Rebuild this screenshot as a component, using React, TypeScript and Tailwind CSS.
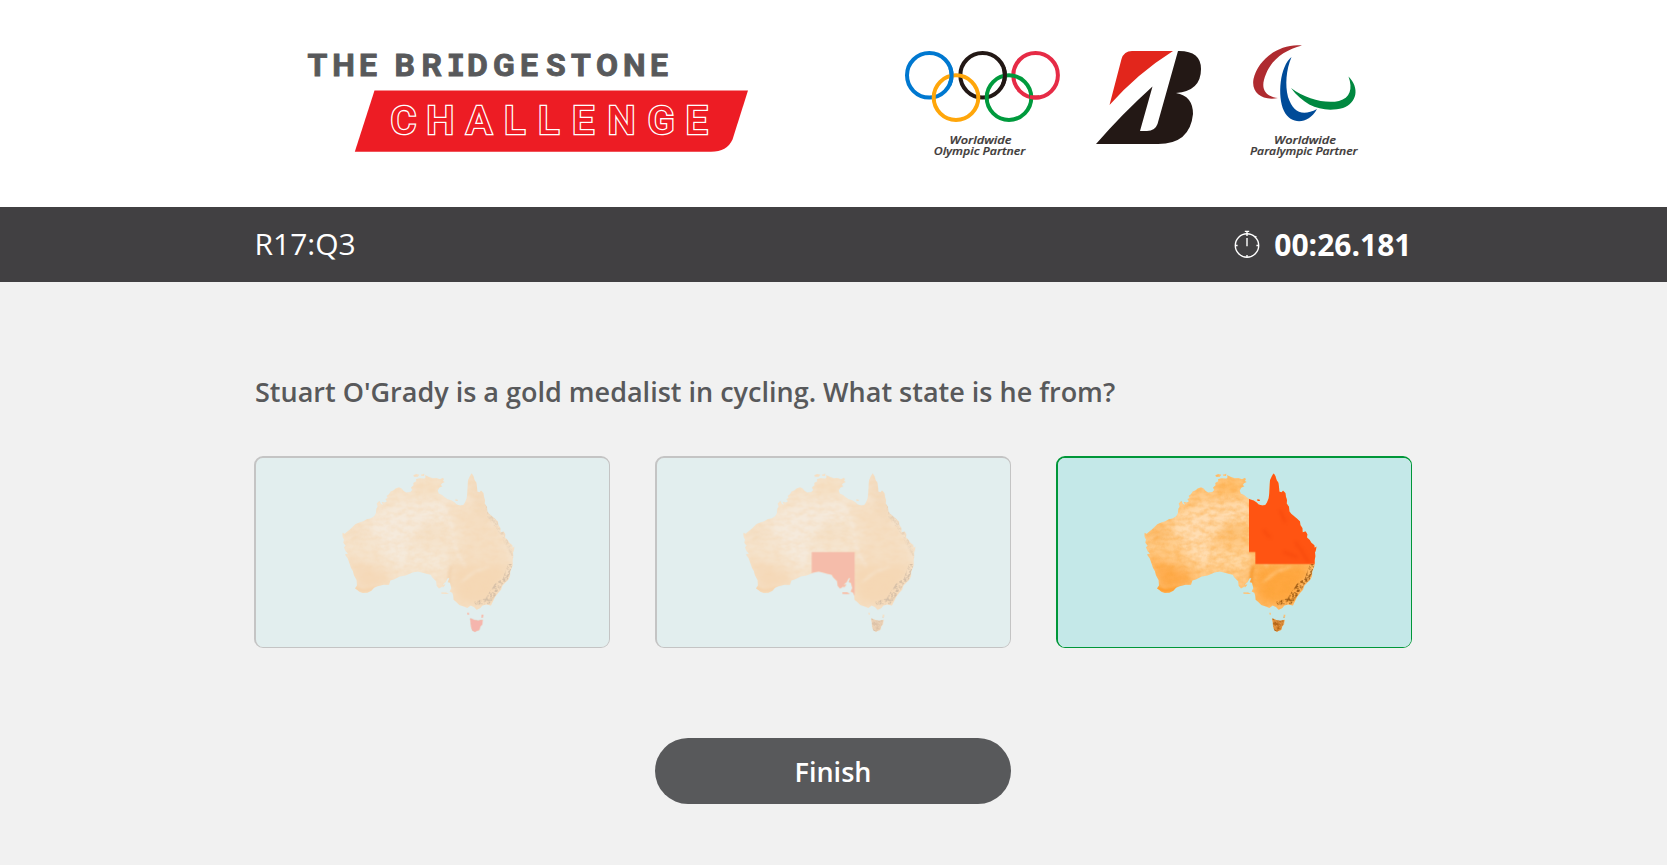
import React from "react";

const MAINLAND =
  "M283 248 L290 251 L299 243 L306 238 L314 230 L322 222 L334 217 L346 213 L357 207 L368 205 L379 198 L384 188 L385 176 L389 169 L386 160 L394 152 L399 161 L405 164 L401 155 L411 157 L417 153 L412 146 L419 143 L416 137 L423 132 L428 124 L437 120 L444 114 L453 111 L461 115 L467 122 L475 127 L487 125 L493 119 L489 112 L497 105 L496 98 L505 93 L504 87 L515 84 L529 85 L533 81 L531 74 L541 79 L554 84 L565 83 L576 87 L584 83 L588 86 L585 92 L590 95 L582 99 L578 104 L583 108 L574 112 L569 121 L572 130 L582 134 L590 141 L599 147 L611 151 L620 157 L626 163 L637 166 L646 164 L651 157 L656 144 L658 128 L659 108 L660 90 L666 77 L671 69 L676 77 L680 90 L685 97 L687 110 L688 124 L695 126 L699 121 L706 128 L708 140 L711 150 L710 160 L717 170 L718 184 L724 191 L733 199 L742 206 L750 214 L751 224 L757 233 L758 246 L767 244 L772 252 L771 262 L779 269 L784 278 L793 285 L794 293 L800 289 L798 299 L795 307 L796 318 L794 330 L794 345 L791 354 L787 364 L786 378 L780 390 L772 397 L763 407 L759 419 L750 429 L741 441 L735 453 L729 466 L715 463 L703 466 L697 474 L686 479 L678 471 L668 466 L658 474 L648 469 L634 465 L625 456 L617 449 L616 438 L613 428 L605 424 L610 414 L606 398 L599 396 L604 384 L599 384 L593 396 L587 401 L581 411 L573 415 L566 407 L564 393 L553 382 L548 374 L535 371 L522 367 L509 364 L493 367 L473 376 L455 379 L440 387 L427 391 L423 404 L407 404 L389 408 L378 413 L370 422 L358 428 L344 429 L334 425 L328 420 L321 415 L327 406 L326 390 L318 375 L315 363 L309 353 L304 338 L299 324 L291 313 L300 310 L292 302 L288 291 L293 287 L286 278 L288 268 L283 260Z";
const TASMANIA =
  "M666 505 L671 506 L679 510 L690 512 L704 509 L703 523 L697 529 L694 540 L685 543 L681 546 L673 541 L669 530 L668 518Z";
const ISLANDS =
  "M496 75 L505 71 L514 73 L509 79 L498 79Z M518 73 L529 70 L528 77 L521 77Z M580 427 L594 427 L603 431 L593 432 L580 431Z M582 407 L589 403 L592 404 L585 412Z M658 488 L662 488 L663 494 L659 494Z M701 494 L706 494 L705 502 L701 503Z M621 148 L628 148 L630 152 L623 152Z";

type State = "tas" | "sa" | "qld";

function AustraliaMap({ id, state }: { id: string; state: State }) {
  return (
    <svg viewBox="24 23 1059 568" preserveAspectRatio="none" className="block h-full w-full">
      <defs>
        <clipPath id={id + "-land"}>
          <path d={MAINLAND} />
          <path d={TASMANIA} />
          <path d={ISLANDS} />
        </clipPath>
        <clipPath id={id + "-main"}>
          <path d={MAINLAND} />
          <path d={ISLANDS} />
        </clipPath>
        <filter id={id + "-soft"} x="-50%" y="-50%" width="200%" height="200%" colorInterpolationFilters="sRGB">
          <feGaussianBlur stdDeviation="16" />
        </filter>
        <filter id={id + "-soft2"} x="-50%" y="-50%" width="200%" height="200%" colorInterpolationFilters="sRGB">
          <feGaussianBlur stdDeviation="4" />
        </filter>
        <filter id={id + "-grain"} x="0" y="0" width="100%" height="100%" colorInterpolationFilters="sRGB">
          <feTurbulence type="fractalNoise" baseFrequency="0.04 0.07" numOctaves="5" seed="8" />
          <feColorMatrix values="0 0 0 0 0.98  0 0 0 0 0.64  0 0 0 0 0.22  1.6 0 0 0 -0.55" />
        </filter>
        <filter id={id + "-dark"} x="-20%" y="-20%" width="140%" height="140%" colorInterpolationFilters="sRGB">
          <feTurbulence type="fractalNoise" baseFrequency="0.11" numOctaves="3" seed="3" result="n" />
          <feColorMatrix in="n" values="0 0 0 0 0  0 0 0 0 0  0 0 0 0 0  3 0 0 0 -1.1" result="m" />
          <feComposite in="SourceGraphic" in2="m" operator="in" />
        </filter>
      </defs>
      <rect x="0" y="0" width="1110" height="620" fill="#c4e8e8" />
      <g clipPath={`url(#${id}-land)`}>
        <rect x="270" y="60" width="540" height="500" fill="#ffcb88" />
        <g filter={`url(#${id}-soft)`}>
          <path d="M350 215 L450 160 L590 150 L600 210 L470 260 L520 330 L440 350 L390 280Z" fill="#ffddb2" />
          <path d="M480 310 L560 300 L610 310 L600 360 L480 350Z" fill="#ffd8a4" />
          <path d="M600 170 L690 170 L760 260 L790 350 L740 460 L620 460 L600 350 L650 260Z" fill="#ffb45a" opacity="0.7" />
          <path d="M610 350 L790 345 L730 470 L620 465Z" fill="#ffa33a" opacity="0.85" />
          <path d="M300 320 L330 420 L420 410 L430 370 L350 340Z" fill="#ffaa4a" />
          <ellipse cx="545" cy="240" rx="30" ry="18" fill="#fab763" />
          <ellipse cx="325" cy="250" rx="25" ry="13" fill="#f8b05a" />
          <path d="M500 90 L580 90 L570 130 L500 130Z" fill="#ffba62" />
          <path d="M655 75 L690 80 L730 210 L700 200Z" fill="#f5a54a" />
        </g>
        <g filter={`url(#${id}-soft2)`} fill="none" strokeLinecap="round">
          <path d="M560 150 Q610 190 620 270 Q625 320 650 345" stroke="#ffe0b6" strokeWidth="8" opacity="0.7" />
          <path d="M640 395 Q680 360 720 350" stroke="#ffce8e" strokeWidth="5" />
          <path d="M322 412 Q340 430 380 415" stroke="#ff961f" strokeWidth="10" />
          <path d="M610 350 Q600 380 606 400" stroke="#f38a17" strokeWidth="7" />
        </g>
        <rect x="270" y="60" width="540" height="500" filter={`url(#${id}-grain)`} opacity="0.6" />
        <g filter={`url(#${id}-dark)`} fill="#8a4c0c" opacity="0.8">
          <path d="M780 342 L794 342 L780 388 L766 400 L735 448 L724 462 L680 464 L680 454 L712 445 L740 402 L764 385Z" />
          <path d="M666 500 L706 500 L694 550 L670 545Z" />
          <path d="M710 150 L722 170 L755 225 L790 290 L800 330 L785 310 L760 255 L718 200Z" opacity="0.45" />
        </g>
        <path d="M666 505 L704 509 L694 540 L681 546 L669 530Z" fill="#c96a10" opacity="0.55" />
      </g>
      {state === "qld" && (
        <g clipPath={`url(#${id}-main)`}>
          <path d="M597 130 L650 60 L720 60 L810 270 L810 342 L616 342 L616 306 L597 306Z" fill="#ff5412" />
          <path d="M735 275 Q755 300 775 335 M640 240 L660 262 M690 180 L705 215 M700 305 L740 320" stroke="#ee3d08" strokeWidth="5" fill="none" opacity="0.5" filter={`url(#${id}-soft2)`} />
        </g>
      )}
      {state === "sa" && (
        <g clipPath={`url(#${id}-main)`}>
          <path d="M488 306 H617 V436 H488Z" fill="#ff541c" />
        </g>
      )}
      {state === "tas" && (
        <>
          <path d={TASMANIA} fill="#ff3d25" />
          <path d="M658 488 L662 488 L663 494 L659 494Z M701 494 L706 494 L705 502 L701 503Z" fill="#ff3d25" />
        </>
      )}
    </svg>
  );
}

function Answer({ state, selected }: { state: State; selected?: boolean }) {
  return (
    <button
      className={
        "h-[192px] w-[356px] overflow-hidden rounded-[9px] border-t-2 border-r border-b border-l-2 " +
        (selected ? "border-[#009739]" : "border-[#c4c4c4]")
      }
    >
      <div className={selected ? "h-full" : "h-full opacity-[0.33]"}>
        <AustraliaMap id={state} state={state} />
      </div>
    </button>
  );
}

function ChallengeLogo() {
  return (
    <svg viewBox="300 44 456 116" className="h-[116px] w-[456px]">
      <g fill="#58595b" stroke="#58595b" strokeWidth="0.9" fontFamily="Roboto" fontWeight="700" fontSize="32">
        <text y="76" x="307.5 332.3 359">THE</text>
        <text y="76" x="394.5 421.5">BR</text>
        <text y="76" x="446.5" fontFamily="DejaVu Sans Mono" fontSize="31">I</text>
        <text y="76" x="467 493 520 546 571 596 623 650">DGESTONE</text>
      </g>
      <path d="M374.5 90.5 H748 L732.5 139.5 Q727 151.8 711 151.8 H354.8Z" fill="#ed1c24" />
      <text
        y="133.6"
        x="390.5 426.3 466 504 538 572 607.5 647.8 685.5"
        fill="#ed1c24"
        stroke="#fff"
        strokeWidth="2.6"
        strokeLinejoin="miter"
        fontFamily="Roboto"
        fontWeight="500"
        fontSize="39.5"
        style={{ paintOrder: "stroke" }}
      >
        CHALLENGE
      </text>
    </svg>
  );
}

function PartnerLogos() {
  const arc = (cx: number, cy: number, a: number, b: number) => {
    const r = 22.3;
    const p = (t: number) => `${cx + r * Math.cos((t * Math.PI) / 180)} ${cy + r * Math.sin((t * Math.PI) / 180)}`;
    return `M${p(a)} A${r} ${r} 0 0 1 ${p(b)}`;
  };
  return (
    <svg viewBox="896 40 470 124" className="h-[124px] w-[470px]">
      <g fill="none" strokeWidth="4">
        <circle cx="929.3" cy="75.3" r="22.3" stroke="#0078d0" />
        <circle cx="982.6" cy="75.3" r="22.3" stroke="#231815" />
        <circle cx="1035.6" cy="75.3" r="22.3" stroke="#e62b46" />
        <circle cx="956" cy="97.6" r="22.3" stroke="#ffa60a" />
        <circle cx="1009" cy="97.6" r="22.3" stroke="#009a3d" />
        <path d={arc(929.3, 75.3, -20, 25)} stroke="#0078d0" />
        <path d={arc(982.6, 75.3, -20, 25)} stroke="#231815" />
        <path d={arc(1035.6, 75.3, 80, 105)} stroke="#e62b46" />
      </g>
      <path d="M1109.5 105 L1121.5 59 Q1124 51 1132 51 H1173 Q1138 73 1109.5 105Z" fill="#e2261c" />
      <path
        d="M1178 51 Q1201 50.5 1201 69 Q1201 91 1176 93 Q1193 96 1193 114 Q1190 144 1158 144 H1096 Q1122 114 1152.5 86.5 L1140 131 H1147 Q1155 131 1157.5 124Z"
        fill="#231815"
      />
      <g>
        <path d="M1302 45.5 C1280 43 1258 59 1253.5 79 C1251 93 1262 101 1278 98 C1264 96 1260 88 1266 74 C1272 59 1285 50 1302 45.5Z" fill="#af2b30" />
        <path d="M1291.5 57 C1280 66 1277 96 1284 111 C1291 125 1308 125 1317 109 C1302 117 1293 112 1288 97 C1285 85 1286 70 1291.5 57Z" fill="#004b98" />
        <path d="M1348.5 76.5 C1360 88 1357 103 1343 108 C1324 113 1305 107 1291 88 C1306 99 1325 104 1339 101 C1350 98 1353 89 1348.5 76.5Z" fill="#008840" />
      </g>
      <g fontFamily="Open Sans" fontWeight="600" fontStyle="italic" fontSize="11" fill="#3e3a39" stroke="#3e3a39" strokeWidth="0.2">
        <text x="949.5" y="144.2" textLength="62" lengthAdjust="spacingAndGlyphs">Worldwide</text>
        <text x="933.8" y="155.3" textLength="91.5" lengthAdjust="spacingAndGlyphs">Olympic Partner</text>
        <text x="1274" y="144.2" textLength="62" lengthAdjust="spacingAndGlyphs">Worldwide</text>
        <text x="1250" y="155.3" textLength="107.5" lengthAdjust="spacingAndGlyphs">Paralympic Partner</text>
      </g>
    </svg>
  );
}

function Stopwatch() {
  return (
    <svg viewBox="0 0 26 30" className="mb-[2px] h-[30px] w-[26px]" fill="none" stroke="#fff" strokeWidth="1.4">
      <circle cx="13" cy="16.5" r="11.7" />
      <path d="M10.8 2.4 H15.2 M13 2.4 V7 M13 9 V17.3 M1.3 16.5 H3.6 M22.4 16.5 H24.7 M13 26 V28 M21 8.5 L22.3 7.2" />
    </svg>
  );
}

export default function App() {
  return (
    <div className="flex h-[865px] w-full flex-col bg-[#f1f1f1] font-['Open_Sans',sans-serif]">
      <header className="flex h-[207px] shrink-0 items-start gap-[140px] bg-white pl-[300px]">
        <div className="pt-[44px]">
          <ChallengeLogo />
        </div>
        <div className="pt-[40px]">
          <PartnerLogos />
        </div>
      </header>
      <div className="h-[75px] shrink-0 bg-[#414042] text-white">
        <div className="mx-auto flex h-full w-[1158px] items-center justify-between">
          <span className="pb-[2px] text-[30px] leading-[40px]">R17:Q3</span>
          <div className="flex items-center gap-[14px] pr-px">
            <Stopwatch />
            <span className="text-[30px] leading-[40px] font-bold">00:26.181</span>
          </div>
        </div>
      </div>
      <main className="ml-[254px] flex w-[1158px] flex-col">
        <h1 className="mt-[90px] pl-px text-[27px] leading-[40px] font-semibold whitespace-nowrap text-[#58595b]">
          Stuart O'Grady is a gold medalist in cycling. What state is he from?
        </h1>
        <div className="mt-[44px] flex justify-between">
          <Answer state="tas" />
          <Answer state="sa" />
          <Answer state="qld" selected />
        </div>
        <button className="mx-auto mt-[90px] h-[66px] w-[356px] rounded-full bg-[#58595b] pt-[2px] text-[27px] font-semibold text-white">
          Finish
        </button>
      </main>
    </div>
  );
}
